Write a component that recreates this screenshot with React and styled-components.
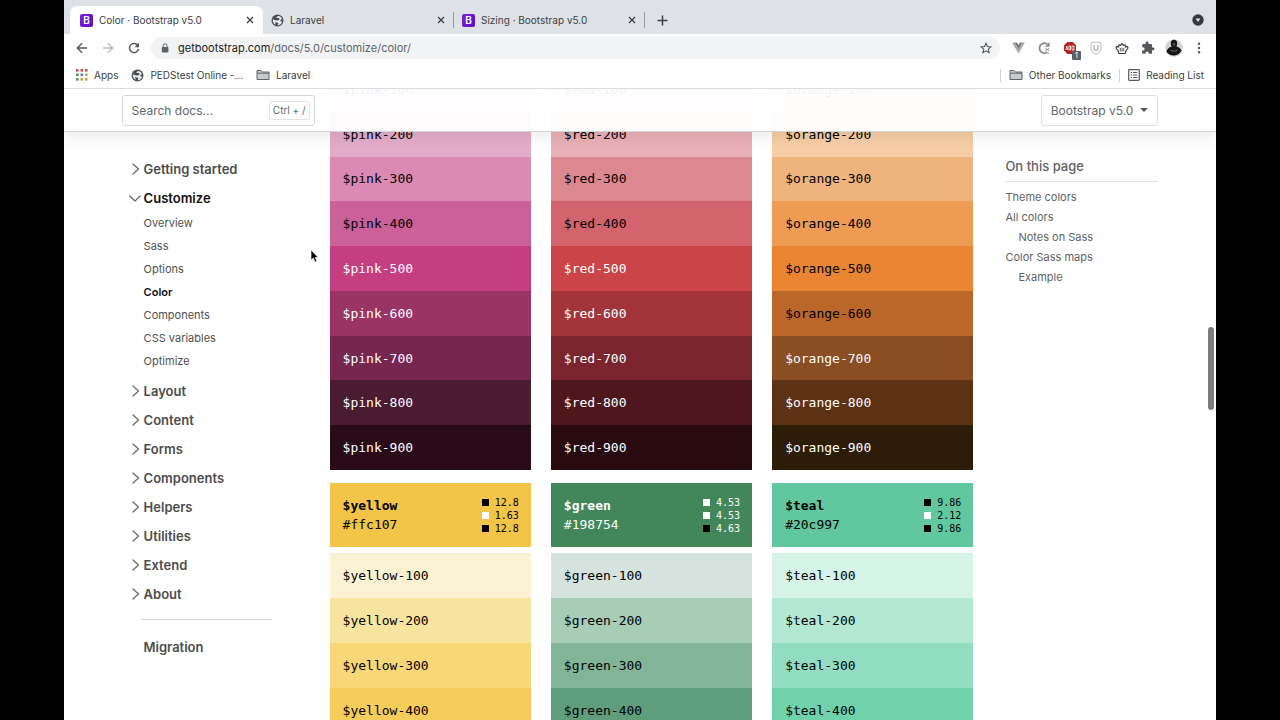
import React from "react";
import styled, { createGlobalStyle } from "styled-components";

const sans = `Inter, "Liberation Sans", sans-serif`;
const mono = `"DejaVu Sans Mono", "Liberation Mono", monospace`;

const GlobalStyle = createGlobalStyle`
  *, *::before, *::after { box-sizing: border-box; }
  body { margin: 0; background: #000; font-family: ${sans}; }
  a { color: inherit; text-decoration: none; }
  ul { list-style: none; margin: 0; padding: 0; }
  button { font: inherit; color: inherit; background: none; border: 0; padding: 0; cursor: pointer; }
  svg { display: block; flex: none; }
`;

const Browser = styled.div`
  display: flex;
  flex-direction: column;
  height: 100vh;
  margin: 0 5%;
  background: #fff;
  overflow: hidden;
`;

/* ---------- tab strip ---------- */
const TabStrip = styled.div`
  display: flex;
  align-items: flex-end;
  flex: none;
  height: 34px;
  padding: 0 12px 0 6px;
  background: #dee1e6;
`;

const Tab = styled.div`
  display: flex;
  align-items: center;
  gap: 6px;
  width: ${(p) => (p.$active ? 193 : 191)}px;
  height: 28px;
  padding: 0 8px 0 ${(p) => (p.$active ? 10 : 8)}px;
  border-radius: 7px 7px 0 0;
  background: ${(p) => (p.$active ? "#fff" : "transparent")};
  font-size: 10px;
  color: #3c4043;
`;

const TabTitle = styled.span`
  flex: 1;
  white-space: nowrap;
`;

const TabDivider = styled.span`
  width: 1px;
  height: 16px;
  margin: 6px 0 6px -1px;
  background: #9a9da2;
`;

const IconButton = styled.button`
  display: grid;
  place-items: center;
  width: ${(p) => p.$size || 16}px;
  height: ${(p) => p.$size || 16}px;
  flex: none;
`;

const NewTab = styled(IconButton)`
  margin: 0 auto 6px 9px;
`;

const TabSearch = styled(IconButton)`
  margin-bottom: 8px;
`;

const Favicon = styled.span`
  display: grid;
  place-items: center;
  width: 13px;
  height: 13px;
  border-radius: 2px;
  background: linear-gradient(120deg, #7a24d8, #5a0fc0);
  color: #fff;
  font-size: 10px;
  font-weight: 600;
  line-height: 13px;
`;

/* ---------- toolbar ---------- */
const Toolbar = styled.div`
  display: flex;
  align-items: center;
  flex: none;
  height: 28px;
  padding: 0 9px 0 10px;
`;

const NavButtons = styled.div`
  display: flex;
  gap: 10px;
  margin-right: 9px;
`;

const AddressBar = styled.div`
  display: flex;
  align-items: center;
  flex: 1;
  gap: 8px;
  height: 22px;
  padding: 0 6px 0 9px;
  border-radius: 11px;
  background: #f1f3f4;
`;

const Url = styled.div`
  flex: 1;
  font-size: 11px;
  color: #5f6368;
  b { font-weight: 400; color: #202124; }
`;

const Extensions = styled.div`
  display: flex;
  gap: 8px;
  margin-left: 9px;
`;

const Extension = styled(IconButton)`
  position: relative;
  width: 18px;
  height: 18px;
  &:last-child { width: 16px; }
`;

const Badge = styled.span`
  position: absolute;
  right: -2px;
  bottom: -3px;
  width: 9px;
  height: 9px;
  border-radius: 1px;
  background: #5f6062;
  color: #fff;
  font-size: 8px;
  line-height: 9px;
  text-align: center;
`;

/* ---------- bookmarks ---------- */
const Bookmarks = styled.div`
  display: flex;
  align-items: center;
  flex: none;
  gap: 13px;
  height: 27px;
  padding: 0 12px;
  border-bottom: 1px solid #dadce0;
  font-size: 10px;
  color: #3c4043;
`;

const Bookmark = styled.a`
  display: flex;
  align-items: center;
  gap: 6px;
  white-space: nowrap;
`;

const BookmarkEnd = styled.div`
  display: flex;
  align-items: center;
  gap: 8px;
  margin-left: auto;
`;

const Rule = styled.span`
  width: 1px;
  height: 13px;
  background: #d0d2d6;
`;

/* ---------- page ---------- */
const Viewport = styled.div`
  position: relative;
  flex: 1;
  min-height: 0;
  overflow: hidden;
`;

const SubNav = styled.header`
  position: absolute;
  z-index: 2;
  top: 0;
  left: 0;
  right: 0;
  display: flex;
  align-items: center;
  justify-content: space-between;
  height: 43px;
  padding: 0 5%;
  border-bottom: 1px solid #d5d6d8;
  background: rgba(255, 255, 255, 0.95);
  box-shadow: 0 6px 13px rgba(0, 0, 0, 0.07);
`;

const SearchBox = styled.label`
  display: flex;
  align-items: center;
  width: 193px;
  height: 31px;
  padding: 0 4px 0 9px;
  border: 1px solid #d3d8dd;
  border-radius: 3px;
  background: #fff;
`;

const SearchInput = styled.input`
  flex: 1;
  min-width: 0;
  border: 0;
  padding: 0;
  outline: 0;
  background: transparent;
  font: 12px ${sans};
  &::placeholder { color: #62676c; opacity: 1; }
`;

const Shortcut = styled.kbd`
  height: 19px;
  padding: 0 3px;
  border: 1px solid #dee2e6;
  border-radius: 3px;
  color: #62676c;
  font: 10px/17px ${sans};
`;

const VersionButton = styled.button`
  display: flex;
  align-items: center;
  gap: 7px;
  height: 31px;
  padding: 0 9px;
  border: 1px solid #dcdfe2;
  border-radius: 3px;
  background: #fff;
  font-size: 12px;
  color: #62676c;
  &::after {
    content: "";
    border: 4px solid transparent;
    border-top-color: #55585c;
    border-bottom: 0;
  }
`;

const Layout = styled.div`
  display: flex;
  padding: 0 5%;
`;

const Sidebar = styled.nav`
  flex: none;
  width: 150px;
  margin-right: 58px;
  padding: 65px 0 0 7px;
`;

const SectionButton = styled.button`
  display: flex;
  align-items: center;
  gap: 3px;
  height: 29px;
  font-size: 13px;
  font-weight: 600;
  color: ${(p) => (p.$open ? "#111" : "#4d4d4d")};
`;

const SubLinks = styled.ul`
  padding: 0 0 3px 15px;
  font-size: 11px;
`;

const SubLink = styled.a`
  display: block;
  line-height: 23px;
  color: ${(p) => (p.$current ? "#111" : "#505050")};
  font-weight: ${(p) => (p.$current ? 600 : 400)};
`;

const Divider = styled.hr`
  margin: 11px 0 13px 12px;
  border: 0;
  border-top: 1px solid #d9d9d9;
`;

const MigrationLink = styled.a`
  display: block;
  padding-left: 15px;
  font-size: 13px;
  font-weight: 600;
  line-height: 28px;
  color: #4d4d4d;
`;

const Swatches = styled.main`
  display: grid;
  grid-template-columns: repeat(3, 1fr);
  column-gap: 20px;
  flex: 1;
  margin: -22px 32px 0 0;
  font-family: ${mono};
  font-size: 13px;
`;

const Shades = styled.div`
  display: grid;
  grid-auto-rows: 1fr;
  height: ${(p) => Math.ceil((p.$count * 403) / 9)}px;
`;

const Shade = styled.div`
  display: flex;
  align-items: center;
  padding: 0 13px;
  background: ${(p) => p.$bg};
  color: ${(p) => (p.$light ? "#fff" : "#000")};
`;

const ColorCard = styled.div`
  display: flex;
  justify-content: space-between;
  align-items: center;
  height: 64px;
  margin: 13px 0 6px;
  padding: 0 12px 0 13px;
  background: ${(p) => p.$bg};
  color: ${(p) => (p.$light ? "#fff" : "#000")};
  line-height: 19px;
  strong { display: block; }
`;

const Contrast = styled.ul`
  font-size: 10px;
  line-height: 13px;
`;

const ContrastItem = styled.li`
  display: flex;
  align-items: center;
  gap: 6px;
  &::before {
    content: "";
    width: 7px;
    height: 7px;
    background: ${(p) => p.$box};
  }
`;

const Toc = styled.aside`
  flex: none;
  width: 153px;
  padding-top: 68px;
  font-size: 11px;
  color: #5f6367;
`;

const TocTitle = styled.strong`
  display: block;
  margin-bottom: 5px;
  padding-bottom: 5px;
  border-bottom: 1px solid #e2e4e6;
  font-size: 13px;
  font-weight: 500;
  line-height: 19px;
`;

const TocLink = styled.a`
  display: block;
  padding-left: ${(p) => (p.$nested ? 13 : 0)}px;
  line-height: 20px;
`;

const ScrollThumb = styled.span`
  position: absolute;
  z-index: 3;
  top: 238px;
  right: 2px;
  width: 6px;
  height: 83px;
  border-radius: 3px;
  background: #7d7d7d;
`;

const Pointer = styled.svg`
  position: absolute;
  z-index: 4;
  left: 246px;
  top: 160px;
`;

/* ---------- icons ---------- */
const Close = () => (
  <svg width="8" height="8" viewBox="0 0 8 8" stroke="#3c4043" strokeWidth="1.3"><path d="M1 1l6 6M7 1L1 7" /></svg>
);
const Globe = () => (
  <svg width="13" height="13" viewBox="0 0 24 24">
    <circle cx="12" cy="12" r="11" fill="#4a4d51" />
    <path d="M13.500 3.500c-2 .5-3.500 2-3.500 4h4c1.500 0 2 1.200 1.500 2.500-.6 1.400-1.600 2-3 2l-4.500-.5-4.500-2c-.8 5 1.500 9 5 10.500.2-2-.3-3.500-2-5l5 .5c2 .2 2.600 2 1.500 3.500l-1 2c4.500 0 8-3 8.800-7-1.500.5-3 .2-3.500-1-.5-1.400.5-2.500 2-3l.7-2c-1.300-2.500-3.500-4.200-6.500-4.500z" fill="#e9ebee" />
  </svg>
);
const Folder = () => (
  <svg width="14" height="12" viewBox="0 0 14 12" fill="#c9cacc" stroke="#5f6368">
    <path d="M1 10.500v-9h4l1.500 1.500H13v7.500z" /><path d="M1 4.200h12" />
  </svg>
);
const AppsGrid = () => {
  const fills = ["#c8534a", "#c8534a", "#c8534a", "#5a9460", "#4f7fc0", "#d3a03c", "#5a9460", "#d3a03c", "#d3a03c"];
  return (
    <svg width="12" height="12" viewBox="0 0 12 12">
      {fills.map((f, i) => <rect key={i} x={(i % 3) * 4.5} y={Math.floor(i / 3) * 4.5} width="2.6" height="2.6" fill={f} />)}
    </svg>
  );
};
const Arrow = ({ forward }) => (
  <svg width="12" height="12" viewBox="0 0 12 12" fill="none" stroke={forward ? "#b7b9bc" : "#54575b"} strokeWidth="1.3">
    <path d={forward ? "M1 6h9.500M6 1.200L10.800 6 6 10.800" : "M11 6H1.500M6 1.200L1.200 6 6 10.800"} />
  </svg>
);
const Reload = () => (
  <svg width="12" height="12" viewBox="0 0 12 12">
    <path d="M9.800 3.300A4.600 4.600 0 1 0 10.600 7" fill="none" stroke="#54575b" strokeWidth="1.4" />
    <path d="M11 .7v4.500H6.500z" fill="#54575b" />
  </svg>
);
const Lock = () => (
  <svg width="10" height="10" viewBox="0 0 10 10">
    <rect x="1.8" y="4" width="6.6" height="5.4" rx=".7" fill="#5f6368" />
    <path d="M3.200 4V2.700a1.900 1.900 0 0 1 3.800 0V4" fill="none" stroke="#5f6368" />
  </svg>
);
const Star = () => (
  <svg width="12" height="12" viewBox="0 0 24 24" fill="none" stroke="#54575b" strokeWidth="2.2">
    <path d="M12 2.500l2.900 6.600 7.100.6-5.400 4.700 1.700 7L12 17.600l-6.300 3.800 1.700-7L2 9.700l7.100-.6z" />
  </svg>
);
const Chevron = ({ open }) => (
  <svg width="12" height="12" viewBox="0 0 12 12" fill="none" stroke="#6a6a6a" strokeWidth="1.3" strokeLinecap="round" strokeLinejoin="round">
    <path d={open ? "M.8 4L6 9l5.200-5" : "M4 1l5.500 5L4 11"} />
  </svg>
);
const ReadingList = () => (
  <svg width="12" height="12" viewBox="0 0 12 12" fill="none" stroke="#54575b">
    <rect x=".7" y=".7" width="10.6" height="10.6" rx=".8" strokeWidth="1.2" />
    <path d="M2.700 3.500H4M5 3.500h4.300M2.700 6H4M5 6h4.300M2.700 8.500H4M5 8.500h4.300" />
  </svg>
);
const VueIcon = () => (
  <svg width="13" height="12" viewBox="0 0 13 12"><path d="M0 .5h2.600L6.500 7.200 10.400.5H13L6.500 11.500z" fill="#aaa" /><path d="M2.600.5H5l1.500 2.600L8 .5h2.400L6.500 7.200z" fill="#777" /></svg>
);
const RefreshExt = () => (
  <svg width="14" height="14" viewBox="0 0 14 14" fill="none" stroke="#8a8a8a">
    <path d="M10.300 3A5 5 0 1 0 9.500 11.700" strokeWidth="1.8" /><path d="M12.600 1v4.800H8z" fill="#8a8a8a" stroke="none" />
    <path d="M8.500 7.500l3.500 2M12 7.500l-3.500 2M8.500 10.500l3.500 2" strokeWidth="1" />
  </svg>
);
const AdBlock = () => (
  <svg width="14" height="14" viewBox="0 0 14 14">
    <path d="M4.300 1h5.400L13 4.300v5L9.700 13H4.300L1 9.300v-5z" fill="#b3261e" />
    <path d="M2.800 9l1-4 1 4M6 9V5h1.500v4zM9 9V5h2v4z" fill="none" stroke="#fff" strokeWidth=".8" />
  </svg>
);
const Shield = () => (
  <svg width="12" height="14" viewBox="0 0 12 14" fill="none" stroke="#b5b8bb">
    <path d="M6 .8l5 1.200v5c0 2.800-2 5-5 6.200C3 12 1 9.800 1 7V2z" /><path d="M4 3.800v3.700c0 2.700 4 2.700 4 0V3.800" strokeWidth="1.4" />
  </svg>
);
const Crown = () => (
  <svg width="14" height="13" viewBox="0 0 14 13" fill="none" stroke="#333" strokeWidth="1.1">
    <path d="M4 11.500h6.200l1-3.300 1.900-2.200-.9-1.600-1.800.6-.3-2-1.700.3L7 1.500 5.600 3.300 3.900 3l-.3 2-1.800-.6L.9 6l2 2.200z" /><path d="M5.300 6v3.500M7 5.500v4M8.700 6v3.500" strokeWidth=".8" />
  </svg>
);
const Puzzle = () => (
  <svg width="14" height="14" viewBox="0 0 24 24" fill="#54575b">
    <path d="M20.500 11H19V7a2 2 0 0 0-2-2h-4V3.500a2.500 2.500 0 0 0-5 0V5H4a2 2 0 0 0-2 2v3.800h1.500a2.700 2.700 0 0 1 0 5.400H2V20c0 1.100.9 2 2 2h3.800v-1.500a2.700 2.700 0 0 1 5.400 0V22H17a2 2 0 0 0 2-2v-4h1.500a2.500 2.500 0 0 0 0-5z" />
  </svg>
);
const Avatar = () => (
  <svg width="18" height="18" viewBox="0 0 18 18">
    <circle cx="9" cy="9" r="8.800" fill="#d3d2d0" />
    <path d="M5.800 4C5.500 0 12.300-.5 12.200 4.300c0 1.500-.3 2.200-.7 3.200 2.500.8 4.300 2 5 4A8.800 8.800 0 0 1 1.500 13C2 10 3.500 8.500 6.800 7.500 6 6.500 5.800 5.500 5.800 4z" fill="#161616" />
    <path d="M7.800 4.200h2.600l-.4 2.200H8.200z" fill="#5f524a" /><path d="M5.500 11.500l4.500.8 2.500-1.300" fill="none" stroke="#6b6058" />
  </svg>
);
const Dots = () => (
  <svg width="4" height="12" viewBox="0 0 4 12" fill="#54575b"><circle cx="2" cy="1.700" r="1.200" /><circle cx="2" cy="6" r="1.200" /><circle cx="2" cy="10.300" r="1.200" /></svg>
);

/* ---------- data ---------- */
const columns = [
  {
    top: { name: "pink", lightFrom: 5, shades: ["#f3d6e4", "#e3acc9", "#db8ab4", "#ca6299", "#c53e82", "#9a3465", "#77264f", "#4b1b31", "#290b1a"] },
    card: { name: "yellow", hex: "#ffc107", bg: "#f3c447", ratios: [["#000", "12.8"], ["#fff", "1.63"], ["#000", "12.8"]] },
    shades: ["#fbf2d3", "#f7e59f", "#f8d777", "#f6cc5a"],
  },
  {
    top: { name: "red", lightFrom: 5, shades: ["#f4d8da", "#e9b0b5", "#dc888e", "#d3636d", "#cb4448", "#a33439", "#7a252d", "#4e171c", "#280b0f"] },
    card: { name: "green", hex: "#198754", bg: "#428759", light: true, ratios: [["#fff", "4.53"], ["#fff", "4.53"], ["#000", "4.63"]] },
    shades: ["#d4e3de", "#a7cdb7", "#81b596", "#5f9e7a"],
  },
  {
    top: { name: "orange", lightFrom: 7, shades: ["#fbe6d3", "#f6cda6", "#efb37e", "#ee9c54", "#ea8534", "#bc672a", "#8b4e22", "#5d3114", "#2d1c08"] },
    card: { name: "teal", hex: "#20c997", bg: "#61c79e", ratios: [["#000", "9.86"], ["#fff", "2.12"], ["#000", "9.86"]] },
    shades: ["#d6f3e8", "#b3e8d5", "#92dcc2", "#70d2ab"],
  },
];

const sections = [
  { label: "Getting started" },
  { label: "Customize", links: ["Overview", "Sass", "Options", "Color", "Components", "CSS variables", "Optimize"] },
  { label: "Layout" }, { label: "Content" }, { label: "Forms" }, { label: "Components" },
  { label: "Helpers" }, { label: "Utilities" }, { label: "Extend" }, { label: "About" },
];

const toc = [["Theme colors"], ["All colors"], ["Notes on Sass", true], ["Color Sass maps"], ["Example", true]];

const tabs = [
  { title: "Color · Bootstrap v5.0", active: true, icon: <Favicon>B</Favicon> },
  { title: "Laravel", icon: <Globe /> },
  { title: "Sizing · Bootstrap v5.0", icon: <Favicon>B</Favicon> },
];

const extensions = [
  ["Vue", <VueIcon />], ["Refresh", <RefreshExt />], ["Ad blocker", <><AdBlock /><Badge>1</Badge></>],
  ["Shield", <Shield />], ["Crown", <Crown />], ["Extensions", <Puzzle />], ["Profile", <Avatar />], ["Menu", <Dots />],
];

const ShadeList = ({ name, shades, lightFrom = 5 }) => (
  <Shades $count={shades.length}>
    {shades.map((bg, i) => (
      <Shade key={bg} $bg={bg} $light={i + 1 >= lightFrom}>{`$${name}-${i + 1}00`}</Shade>
    ))}
  </Shades>
);

export default function App() {
  return (
    <>
      <GlobalStyle />
      <Browser>
        <TabStrip>
          {tabs.map((t) => (
            <React.Fragment key={t.title}>
              <Tab $active={t.active}>
                {t.icon}
                <TabTitle>{t.title}</TabTitle>
                <IconButton $size={10} aria-label="Close tab"><Close /></IconButton>
              </Tab>
              {!t.active && <TabDivider />}
            </React.Fragment>
          ))}
          <NewTab aria-label="New tab">
            <svg width="11" height="11" viewBox="0 0 11 11" stroke="#3c4043" strokeWidth="1.5"><path d="M5.500 .5v10M.5 5.500h10" /></svg>
          </NewTab>
          <TabSearch $size={12} aria-label="Search tabs">
            <svg width="12" height="12" viewBox="0 0 12 12"><circle cx="6" cy="6" r="5.700" fill="#35383c" /><path d="M3.500 4.500h5L6 8z" fill="#dee1e6" /></svg>
          </TabSearch>
        </TabStrip>

        <Toolbar>
          <NavButtons>
            <IconButton aria-label="Back"><Arrow /></IconButton>
            <IconButton aria-label="Forward"><Arrow forward /></IconButton>
            <IconButton aria-label="Reload"><Reload /></IconButton>
          </NavButtons>
          <AddressBar>
            <Lock />
            <Url><b>getbootstrap.com</b>/docs/5.0/customize/color/</Url>
            <IconButton aria-label="Bookmark"><Star /></IconButton>
          </AddressBar>
          <Extensions>
            {extensions.map(([label, icon]) => <Extension key={label} aria-label={label}>{icon}</Extension>)}
          </Extensions>
        </Toolbar>

        <Bookmarks>
          <Bookmark href="#apps"><AppsGrid />Apps</Bookmark>
          <Bookmark href="#peds"><Globe />PEDStest Online -...</Bookmark>
          <Bookmark href="#laravel"><Folder />Laravel</Bookmark>
          <BookmarkEnd>
            <Rule />
            <Bookmark href="#other"><Folder />Other Bookmarks</Bookmark>
            <Rule />
            <Bookmark href="#reading"><ReadingList />Reading List</Bookmark>
          </BookmarkEnd>
        </Bookmarks>

        <Viewport>
          <SubNav>
            <SearchBox>
              <SearchInput type="search" aria-label="Search docs" placeholder="Search docs..." />
              <Shortcut>Ctrl + /</Shortcut>
            </SearchBox>
            <VersionButton>Bootstrap v5.0</VersionButton>
          </SubNav>

          <Layout>
            <Sidebar aria-label="Docs navigation">
              {sections.map((s) => (
                <React.Fragment key={s.label}>
                  <SectionButton $open={!!s.links} aria-expanded={!!s.links}>
                    <Chevron open={!!s.links} />{s.label}
                  </SectionButton>
                  {s.links && (
                    <SubLinks>
                      {s.links.map((l) => <li key={l}><SubLink href="#nav" $current={l === "Color"}>{l}</SubLink></li>)}
                    </SubLinks>
                  )}
                </React.Fragment>
              ))}
              <Divider />
              <MigrationLink href="#migration">Migration</MigrationLink>
            </Sidebar>

            <Swatches>
              {columns.map((c) => (
                <div key={c.card.name}>
                  <ShadeList {...c.top} />
                  <ColorCard $bg={c.card.bg} $light={c.card.light}>
                    <div><strong>${c.card.name}</strong>{c.card.hex}</div>
                    <Contrast>
                      {c.card.ratios.map(([box, r], i) => <ContrastItem key={i} $box={box}>{r}</ContrastItem>)}
                    </Contrast>
                  </ColorCard>
                  <ShadeList name={c.card.name} shades={c.shades} />
                </div>
              ))}
            </Swatches>

            <Toc>
              <TocTitle>On this page</TocTitle>
              {toc.map(([label, nested]) => <TocLink key={label} href="#toc" $nested={nested}>{label}</TocLink>)}
            </Toc>
          </Layout>

          <ScrollThumb />
          <Pointer width="9" height="14" viewBox="0 0 9 14">
            <path d="M1 1v10.200l2.300-2.100 1.700 3.900 1.900-.8-1.700-3.800h3z" fill="#000" stroke="#fff" strokeWidth=".7" />
          </Pointer>
        </Viewport>
      </Browser>
    </>
  );
}
